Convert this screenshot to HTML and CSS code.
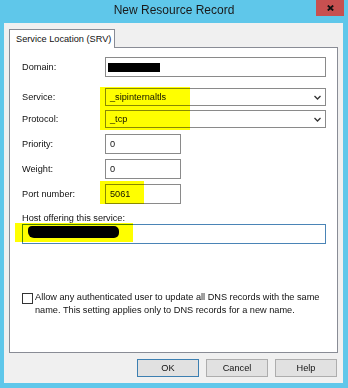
FILE: index.html
```html
<!DOCTYPE html>
<html lang="en">
<head>
    <meta charset="UTF-8">
    <title>New Resource Record</title>
    <link rel="stylesheet" href="styles.css">
</head>
<body>
    <div class="window">
        <div class="titlebar">
            <span class="title">New Resource Record</span>
            <div class="close">
                <svg width="7" height="6" viewBox="0 0 7 6"><path d="M0.8 0.5 L6.2 5.5 M6.2 0.5 L0.8 5.5" stroke="#111" stroke-width="1.8"/></svg>
            </div>
        </div>

        <div class="dialog">
            <div class="tabs">
                <div class="tab">Service Location (SRV)</div>
            </div>

            <div class="panel">
                <div class="row r-domain">
                    <label>Domain:</label>
                    <div class="field"><span class="redact"></span></div>
                </div>
                <div class="row r-service">
                    <label>Service:</label>
                    <div class="field select">
                        <span>_sipinternaltls</span>
                        <svg class="arrow" width="7" height="5" viewBox="0 0 7 5"><path d="M0.5 1 L3.5 4 L6.5 1" fill="none" stroke="#333" stroke-width="1.3"/></svg>
                    </div>
                </div>
                <div class="row r-protocol">
                    <label>Protocol:</label>
                    <div class="field select">
                        <span>_tcp</span>
                        <svg class="arrow" width="7" height="5" viewBox="0 0 7 5"><path d="M0.5 1 L3.5 4 L6.5 1" fill="none" stroke="#333" stroke-width="1.3"/></svg>
                    </div>
                </div>
                <div class="row r-num">
                    <label>Priority:</label>
                    <div class="field short">0</div>
                </div>
                <div class="row r-num">
                    <label>Weight:</label>
                    <div class="field short">0</div>
                </div>
                <div class="row r-num">
                    <label>Port number:</label>
                    <div class="field short">5061</div>
                </div>

                <div class="host-label">Host offering this service:</div>
                <div class="field host"><span class="redact-host"></span></div>

                <div class="check-row">
                    <span class="checkbox"></span>
                    <span class="check-text">Allow any authenticated user to update all DNS records with the same<br>name. This setting applies only to DNS records for a new name.</span>
                </div>
            </div>

            <div class="buttons">
                <button class="btn default">OK</button>
                <button class="btn">Cancel</button>
                <button class="btn">Help</button>
            </div>
        </div>

        <!-- highlighter marks -->
        <div class="mark mark-service"></div>
        <div class="mark mark-port"></div>
        <div class="mark mark-host"></div>
    </div>
</body>
</html>
```

FILE: styles.css
```css
* {
    box-sizing: border-box;
}
body {
    margin: 0;
    font-family: "Liberation Sans", Arial, sans-serif;
    font-size: 9.2px;
    color: #111;
}
.window {
    position: relative;
    width: 348px;
    height: 388px;
    background-color: #5fc7ea;
    display: flex;
    flex-direction: column;
}
.titlebar {
    height: 23px;
    display: grid;
    grid-template-columns: 1fr auto 1fr;
    align-items: start;
}
.title {
    grid-column: 2;
    font-size: 12px;
    line-height: 16px;
    padding-top: 2px;
    color: #1a1a1a;
}
.close {
    grid-column: 3;
    justify-self: end;
    width: 28px;
    height: 16px;
    margin-right: 4px;
    background-color: #c75050;
    display: flex;
    align-items: center;
    justify-content: center;
}
.dialog {
    flex: 1;
    margin: 0 5px 5px 4px;
    background-color: #f0f0f0;
    padding: 6px 5px 0 5px;
    display: flex;
    flex-direction: column;
}
.tabs {
    display: flex;
    position: relative;
    z-index: 1;
    margin-bottom: -1px;
}
.tab {
    width: 106px;
    height: 19px;
    background-color: #fff;
    border: 1px solid #898c95;
    border-bottom: none;
    padding: 4px 0 0 6px;
    line-height: 11px;
}
.panel {
    height: 306px;
    background-color: #fff;
    border: 1px solid #898c95;
    padding: 9px 11px 0 12px;
}
.row {
    display: flex;
    align-items: center;
}
.row label {
    width: 83px;
    flex: none;
}
.r-service {
    margin-top: 11px;
}
.r-protocol {
    margin-top: 4px;
}
.r-num {
    margin-top: 5px;
}
.r-protocol + .r-num {
    margin-top: 6px;
}
.field {
    flex: 1;
    height: 20px;
    border: 1px solid #8a8a8a;
    background-color: #fff;
    display: flex;
    align-items: center;
    padding: 0 4px;
}
.field.select {
    height: 18px;
    justify-content: space-between;
    padding-right: 4px;
}
.field.short {
    flex: none;
    width: 76px;
}
.redact {
    width: 52px;
    height: 9px;
    margin-left: -2px;
    background-color: #000;
}
.host-label {
    margin-top: 8px;
    line-height: 12px;
}
.field.host {
    border-color: #4a84b6;
    align-items: flex-start;
}
.redact-host {
    width: 91px;
    height: 12px;
    margin-top: 1px;
    margin-left: 1px;
    background-color: #000;
    border-radius: 4px 5px 5px 6px;
}
.check-row {
    margin-top: 47px;
    display: flex;
    align-items: flex-start;
    line-height: 13px;
}
.checkbox {
    width: 11px;
    height: 11px;
    margin-top: 2px;
    margin-right: 2px;
    border: 1px solid #333;
    background-color: #fff;
    flex: none;
}
.check-text {
    white-space: nowrap;
}
.buttons {
    display: flex;
    justify-content: flex-end;
    gap: 7px;
    margin-top: 6px;
    margin-right: 1px;
}
.btn {
    width: 62px;
    height: 18px;
    padding: 0;
    font-family: inherit;
    font-size: 9.2px;
    color: #111;
    background-color: #e1e1e1;
    border: 1px solid #adadad;
}
.btn.default {
    border-color: #3c7fb1;
}
.mark {
    position: absolute;
    background-color: #ffff00;
    mix-blend-mode: multiply;
}
.mark-service {
    left: 100px;
    top: 87px;
    width: 90px;
    height: 43px;
}
.mark-port {
    left: 100px;
    top: 181px;
    width: 44px;
    height: 23px;
}
.mark-host {
    left: 15px;
    top: 223px;
    width: 118px;
    height: 19px;
}
```
